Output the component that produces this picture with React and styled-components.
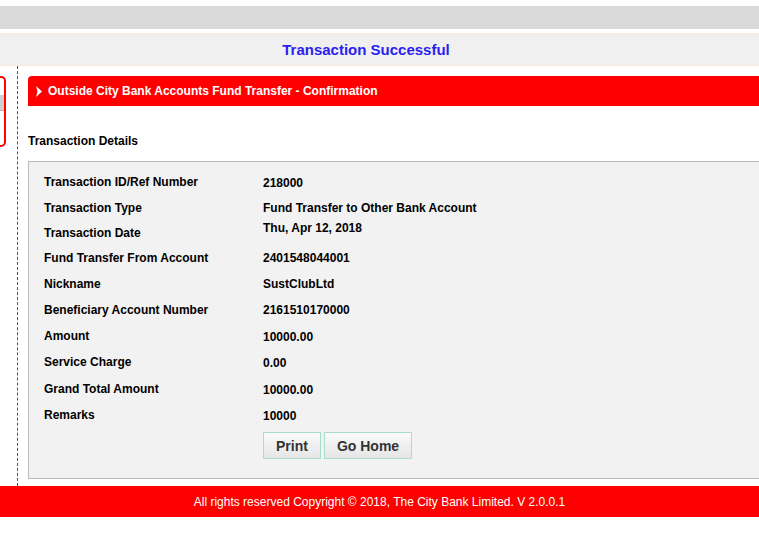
import React from "react";
import styled, { createGlobalStyle } from "styled-components";

const Global = createGlobalStyle`
  html, body { margin: 0; padding: 0; background: #fff; overflow: hidden; }
  body { font-family: "Liberation Sans", Arial, Helvetica, sans-serif; color: #000; }
  * { box-sizing: border-box; }
`;

const Page = styled.div`
  width: 759px;
  padding-top: 6px;
`;

const TopBar = styled.div`
  height: 23px;
  background: #dadada;
`;

const TitleBar = styled.div`
  margin-top: 4px;
  height: 33px;
  background: #f0f0f0;
  border-top: 1px solid #fbe8d0;
  border-bottom: 1px solid #fbe8d0;
  display: flex;
  align-items: center;
  justify-content: center;
  padding-right: 27px;
`;

const Title = styled.h1`
  margin: 0;
  font-size: 15px;
  font-weight: bold;
  color: #2a1ef0;
`;

const Body = styled.div`
  display: flex;
  align-items: stretch;
`;

const Sidebar = styled.div`
  width: 17px;
  flex: none;
  padding-top: 10px;
  overflow: hidden;
`;

const SideBox = styled.div`
  margin-left: -36px;
  width: 42px;
  height: 71px;
  border: 2px solid #ff0000;
  border-radius: 5px;
  background: #fff;
  padding-top: 17px;
`;

const SideItem = styled.div`
  height: 16px;
  background: #cfcfcf;
  border-bottom: 1px solid #e8a0a0;
`;

const Main = styled.div`
  flex: none;
  width: 800px;
  border-left: 1px dashed #e3141c;
  padding: 10px 0 7px 10px;
`;

const Banner = styled.div`
  height: 30px;
  background: #ff0000;
  border-radius: 4px 0 0 0;
  display: flex;
  align-items: center;
  gap: 6px;
  padding-left: 8px;
  color: #fff;
  font-size: 12px;
  font-weight: bold;
`;

const SectionTitle = styled.div`
  margin-top: 28px;
  font-size: 12px;
  font-weight: bold;
  line-height: 14px;
  height: 14px;
`;

const DetailsBox = styled.div`
  margin-top: 13px;
  background: #f2f2f2;
  border: 1px solid #bbbbbb;
  padding: 7px 0 19px 15px;
`;

const Grid = styled.div`
  display: grid;
  grid-template-columns: 219px 1fr;
  grid-template-rows: 26px 26px 24px 26px 26px 26px 26px 26px 27px 26px;
`;

const Label = styled.div`
  font-size: 12px;
  font-weight: bold;
  display: flex;
  align-items: center;
`;

const Value = styled.div`
  font-size: 12px;
  font-weight: bold;
  display: flex;
  align-items: ${(p) => (p.$top ? "flex-start" : "center")};
  padding-top: ${(p) => (p.$low ? "2px" : "0")};
`;

const Actions = styled.div`
  margin-top: 4px;
  margin-left: 219px;
  display: flex;
  gap: 3px;
`;

const Button = styled.button`
  height: 27px;
  padding: 0 12px;
  font-family: "Liberation Sans", Arial, sans-serif;
  font-size: 14px;
  font-weight: bold;
  color: #333;
  background: linear-gradient(#fafafa, #e6e6e6);
  border: 1px solid #a9dcc9;
  border-radius: 0;
  cursor: pointer;
`;

const Footer = styled.div`
  height: 31px;
  background: #ff0000;
  color: #fff;
  font-size: 12px;
  display: flex;
  align-items: center;
  justify-content: center;
`;

const rows = [
  ["Transaction ID/Ref Number", "218000", true],
  ["Transaction Type", "Fund Transfer to Other Bank Account"],
  ["Transaction Date", "Thu, Apr 12, 2018", false, true],
  ["Fund Transfer From Account", "2401548044001"],
  ["Nickname", "SustClubLtd"],
  ["Beneficiary Account Number", "2161510170000"],
  ["Amount", "10000.00", true],
  ["Service Charge", "0.00", true],
  ["Grand Total Amount", "10000.00", true],
  ["Remarks", "10000", true],
];

const Arrow = () => (
  <svg width="6" height="11" viewBox="0 0 6 11" aria-hidden="true">
    <polygon points="0,0 6,5.5 0,11 1.5,5.5" fill="#fff" />
  </svg>
);

export default function App() {
  return (
    <Page>
      <Global />
      <TopBar />
      <TitleBar>
        <Title>Transaction Successful</Title>
      </TitleBar>
      <Body>
        <Sidebar>
          <SideBox>
            <SideItem />
          </SideBox>
        </Sidebar>
        <Main>
          <Banner>
            <Arrow />
            Outside City Bank Accounts Fund Transfer - Confirmation
          </Banner>
          <SectionTitle>Transaction Details</SectionTitle>
          <DetailsBox>
            <Grid>
              {rows.map(([l, v, low, top]) => (
                <React.Fragment key={l}>
                  <Label>{l}</Label>
                  <Value $low={low} $top={top}>{v}</Value>
                </React.Fragment>
              ))}
            </Grid>
            <Actions>
              <Button>Print</Button>
              <Button>Go Home</Button>
            </Actions>
          </DetailsBox>
        </Main>
      </Body>
      <Footer>All rights reserved Copyright © 2018, The City Bank Limited. V 2.0.0.1</Footer>
    </Page>
  );
}
